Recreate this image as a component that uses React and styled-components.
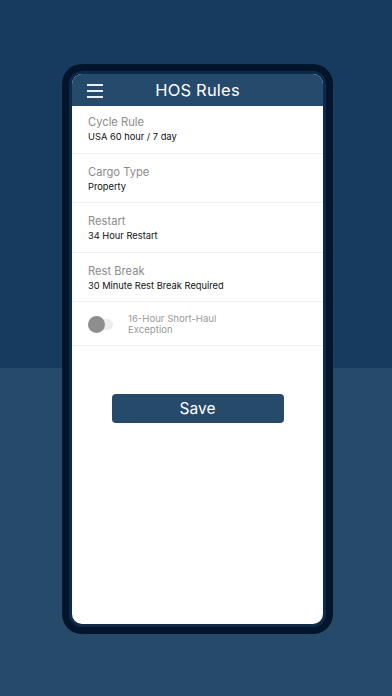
import React from "react";
import styled, { createGlobalStyle } from "styled-components";

const GlobalStyle = createGlobalStyle`
  html, body {
    margin: 0;
    padding: 0;
  }
  body {
    font-family: Inter, "Noto Sans", "Liberation Sans", sans-serif;
  }
`;

const Page = styled.div`
  width: 392px;
  height: 696px;
  overflow: hidden;
  background: linear-gradient(to bottom, #173a5f 0, #173a5f 368px, #264a6a 368px);
  display: flex;
  justify-content: center;
  padding: 64px 0 0 3px;
  box-sizing: border-box;
`;

const Phone = styled.div`
  width: 271px;
  height: 570px;
  box-sizing: border-box;
  border-radius: 20px;
  background: #03152a;
  padding: 7px;
  display: flex;
`;

const Screen = styled.div`
  flex: 1;
  border: 3px solid #0d2a49;
  border-radius: 13px;
  background: #ffffff;
  overflow: hidden;
  display: flex;
  flex-direction: column;
`;

const Header = styled.header`
  height: 32px;
  background: #254a6b;
  display: flex;
  align-items: center;
  position: relative;
  justify-content: center;
`;

const Burger = styled.div`
  position: absolute;
  left: 15px;
  top: 10px;
  width: 16px;
  display: flex;
  flex-direction: column;
  gap: 4px;

  span {
    display: block;
    height: 2px;
    background: #e6edf3;
  }
`;

const Title = styled.h1`
  margin: 0;
  color: #ffffff;
  font-size: 16.5px;
  font-weight: 400;
  letter-spacing: 0.2px;
`;

const Row = styled.div`
  padding: ${(p) => (p.first ? "9px" : "11px")} 16px 9.5px;
  border-bottom: 1px solid #f0f0f0;
  display: flex;
  flex-direction: column;
  gap: 2px;
`;

const Label = styled.div`
  font-size: 11.2px;
  line-height: 14px;
  color: #8c8c8c;
`;

const Value = styled.div`
  font-size: 9.3px;
  line-height: 12px;
  color: #111111;
`;

const ToggleRow = styled.div`
  padding: 11px 16px 10px;
  border-bottom: 1px solid #f0f0f0;
  display: flex;
  align-items: center;
  gap: 15px;
`;

const Toggle = styled.div`
  position: relative;
  width: 25px;
  height: 11px;
  border-radius: 6px;
  background: #ececec;

  &::before {
    content: "";
    position: absolute;
    left: 0;
    top: -3px;
    width: 17px;
    height: 17px;
    border-radius: 50%;
    background: #8e8e8e;
  }
`;

const ToggleText = styled.div`
  font-size: 9.6px;
  line-height: 11px;
  color: #9a9a9a;
`;

const SaveWrap = styled.div`
  display: flex;
  justify-content: center;
  padding-top: 48px;
`;

const SaveButton = styled.button`
  width: 172px;
  height: 29px;
  border: none;
  border-radius: 4px;
  background: #254a6a;
  color: #ffffff;
  font-family: inherit;
  font-size: 15.5px;
  font-weight: 400;
`;

const rules = [
  { label: "Cycle Rule", value: "USA 60 hour / 7 day" },
  { label: "Cargo Type", value: "Property" },
  { label: "Restart", value: "34 Hour Restart" },
  { label: "Rest Break", value: "30 Minute Rest Break Required" },
];

export default function App() {
  return (
    <>
      <GlobalStyle />
      <Page>
        <Phone>
          <Screen>
            <Header>
              <Burger>
                <span />
                <span />
                <span />
              </Burger>
              <Title>HOS Rules</Title>
            </Header>
            {rules.map((r, i) => (
              <Row key={r.label} first={i === 0}>
                <Label>{r.label}</Label>
                <Value>{r.value}</Value>
              </Row>
            ))}
            <ToggleRow>
              <Toggle />
              <ToggleText>
                16-Hour Short-Haul
                <br />
                Exception
              </ToggleText>
            </ToggleRow>
            <SaveWrap>
              <SaveButton>Save</SaveButton>
            </SaveWrap>
          </Screen>
        </Phone>
      </Page>
    </>
  );
}
